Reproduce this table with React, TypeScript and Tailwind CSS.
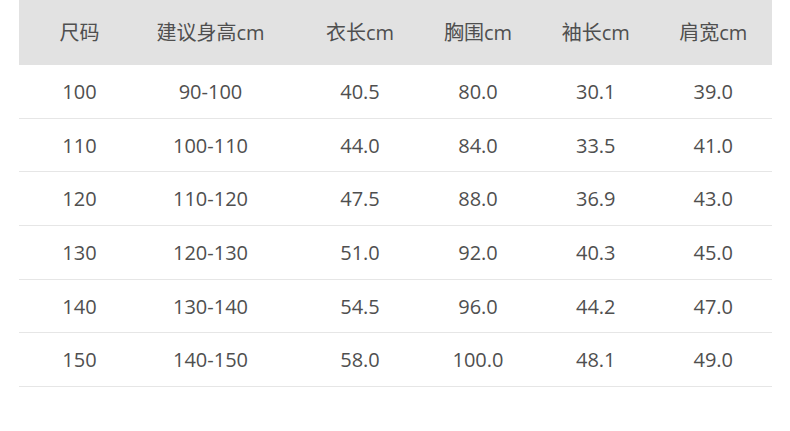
const headers = ['尺码', '建议身高cm', '衣长cm', '胸围cm', '袖长cm', '肩宽cm'];

const rows = [
  ['100', '90-100', '40.5', '80.0', '30.1', '39.0'],
  ['110', '100-110', '44.0', '84.0', '33.5', '41.0'],
  ['120', '110-120', '47.5', '88.0', '36.9', '43.0'],
  ['130', '120-130', '51.0', '92.0', '40.3', '45.0'],
  ['140', '130-140', '54.5', '96.0', '44.2', '47.0'],
  ['150', '140-150', '58.0', '100.0', '48.1', '49.0'],
];

// third column sits a little right of its grid track
const cellClass = (i: number) => (i === 2 ? 'pl-5 text-center' : 'text-center');

export default function App() {
  return (
    <div
      className="w-[790px] h-[431px] bg-white text-[#4f4f4f] text-[20px]"
      style={{ fontFamily: '"Open Sans", "Noto Sans CJK SC", sans-serif' }}
    >
      <div className="ml-[19px] w-[753px]">
        {/* Header */}
        <div className="grid grid-cols-[121px_141px_138px_118px_117.5px_117.5px] items-center h-[65px] bg-[#e2e2e2]">
          {headers.map((h, i) => (
            <div key={h} className={cellClass(i)}>
              {h}
            </div>
          ))}
        </div>

        {/* Rows */}
        {rows.map((row) => (
          <div
            key={row[0]}
            className="grid grid-cols-[121px_141px_138px_118px_117.5px_117.5px] items-center h-[53.7px] pt-px border-b border-[#e6e6e6]"
          >
            {row.map((cell, i) => (
              <div key={i} className={cellClass(i)}>
                {cell}
              </div>
            ))}
          </div>
        ))}
      </div>
    </div>
  );
}
